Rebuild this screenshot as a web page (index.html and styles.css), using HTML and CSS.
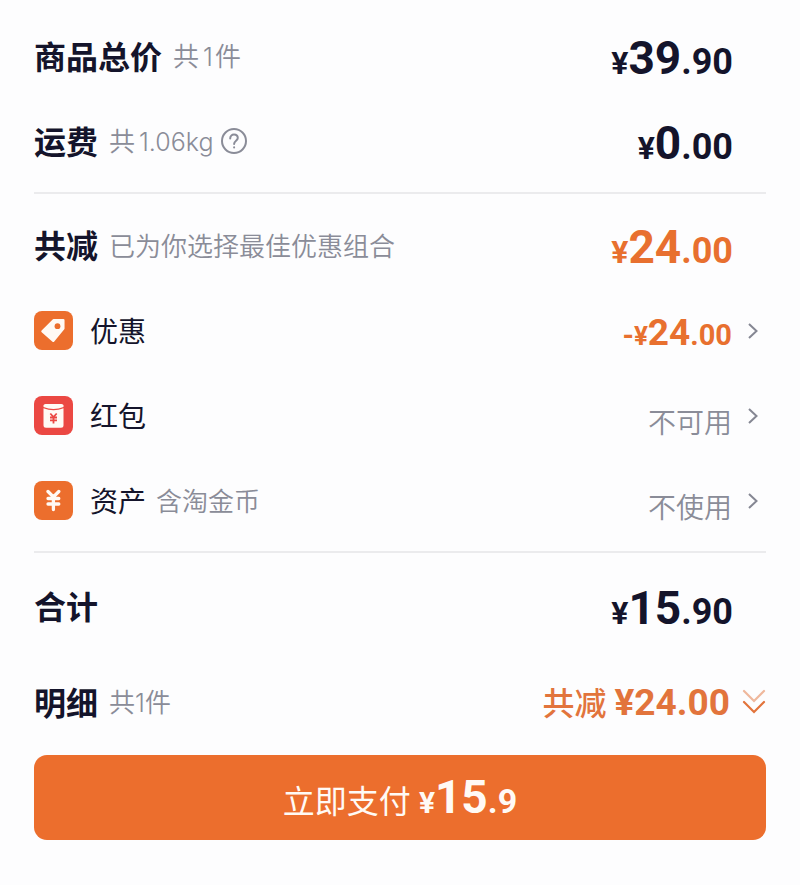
FILE: index.html
```html
<!DOCTYPE html>
<html lang="zh-CN">
<head>
  <meta charset="UTF-8">
  <meta name="viewport" content="width=device-width, initial-scale=1.0">
  <title>订单支付</title>
  <link rel="stylesheet" href="styles.css">
</head>
<body>
  <main class="checkout">
    <section class="section">
      <div class="row">
        <h2 class="title">商品总价</h2>
        <span class="note">共<span class="num spaced">1</span>件</span>
        <span class="price"><span class="yen">¥</span><span class="int">39</span>.90</span>
      </div>
      <div class="row">
        <h2 class="title">运费</h2>
        <span class="note">共<span class="num spaced">1.06kg</span></span>
        <button class="help" type="button" aria-label="运费说明">
          <svg width="28" height="28" viewBox="0 0 28 28" fill="none" stroke="currentColor" stroke-width="2" stroke-linecap="round">
            <circle cx="14" cy="13" r="12"/>
            <path d="M10.2 10.4C10.2 8 11.8 6.6 14 6.6s3.8 1.4 3.8 3.5c0 2.6-3.7 2.8-3.7 5.8"/>
            <path d="M14.1 19.3v.2"/>
          </svg>
        </button>
        <span class="price"><span class="yen">¥</span><span class="int">0</span>.00</span>
      </div>
    </section>

    <section class="section">
      <div class="row">
        <h2 class="title">共减</h2>
        <span class="note">已为你选择最佳优惠组合</span>
        <span class="price orange"><span class="yen">¥</span><span class="int">24</span>.00</span>
      </div>
      <button class="row item" type="button">
        <!-- 标签 -->
        <svg class="icon" width="39" height="39" viewBox="0 0 39 39">
          <rect width="39" height="39" rx="8" fill="#ec6e2d"/>
          <path d="M19.8 9.2H29.3V17.4L19.300 29.800 8.500 20.300z" fill="#fffaf5" stroke="#fffaf5" stroke-width="2.500" stroke-linejoin="round"/>
          <circle cx="23.500" cy="15.200" r="2.900" fill="#ec6e2d"/>
        </svg>
        <span class="label">优惠</span>
        <span class="price small orange">-<span class="yen">¥</span><span class="int">24</span>.00</span>
        <svg class="arrow" width="12" height="18" viewBox="0 0 12 18"><path d="M2 2l7.500 7L2 16"/></svg>
      </button>
      <button class="row item" type="button">
        <!-- 红包 -->
        <svg class="icon" width="39" height="39" viewBox="0 0 39 39">
          <rect width="39" height="39" rx="8" fill="#eb4843"/>
          <path d="M9.500 11v-1.500Q9.500 8 11.500 8h16q2 0 2 1.500V11q-10 4-20 0z" fill="#fffaf5"/>
          <path d="M9.500 12.200q10 4.300 20 0v17q0 2.500-2.500 2.500H12q-2.500 0-2.500-2.500z" fill="#fffaf5"/>
          <path d="M16.300 17.500l3.200 3.500 3.200-3.500M16 21.500h7M16 24.300h7M19.500 21v6.500" fill="none" stroke="#eb4843" stroke-width="1.800"/>
        </svg>
        <span class="label">红包</span>
        <span class="state">不可用</span>
        <svg class="arrow" width="12" height="18" viewBox="0 0 12 18"><path d="M2 2l7.500 7L2 16"/></svg>
      </button>
      <button class="row item" type="button">
        <!-- 资产 -->
        <svg class="icon" width="39" height="39" viewBox="0 0 39 39">
          <rect width="39" height="39" rx="8" fill="#ec6e2d"/>
          <path d="M14 10.500l5.400 5.500 5.400-5.500M14 17.500h10.800M14 23h10.800M19.400 16v12.500" fill="none" stroke="#fffaf5" stroke-width="3.300" stroke-linecap="round"/>
        </svg>
        <span class="label">资产</span>
        <span class="note">含淘金币</span>
        <span class="state">不使用</span>
        <svg class="arrow" width="12" height="18" viewBox="0 0 12 18"><path d="M2 2l7.500 7L2 16"/></svg>
      </button>
    </section>

    <section class="section total">
      <div class="row">
        <h2 class="title">合计</h2>
        <span class="price"><span class="yen">¥</span><span class="int">15</span>.90</span>
      </div>
      <div class="row">
        <h2 class="title">明细</h2>
        <span class="note">共<span class="num">1</span>件</span>
        <button class="detail" type="button">
          <span>共减</span>
          <span class="amount">¥24.00</span>
          <svg width="24" height="26" viewBox="0 0 24 26" fill="none" stroke="#e2743c" stroke-width="2.200" stroke-linecap="round">
            <path d="M2 2l10 10L22 2" opacity=".5"/>
            <path d="M2 13l10 10 10-10"/>
          </svg>
        </button>
      </div>
    </section>

    <button class="pay" type="button">
      <span>立即支付</span>
      <span class="pay-price"><span class="yen">¥</span><span class="int">15</span>.9</span>
    </button>
  </main>
</body>
</html>
```
FILE: styles.css
```css
* {
  box-sizing: border-box;
}
body {
  margin: 0;
  background-color: #fdfdfe;
  color: #14142b;
  font-family: "Noto Sans CJK SC", sans-serif;
}
button {
  border: none;
  background: none;
  padding: 0;
  color: inherit;
  font-family: inherit;
  cursor: pointer;
}
.checkout {
  padding: 14px 34px 45px;
}
.section {
  padding-bottom: 8px;
  margin-bottom: 9px;
  border-bottom: 2px solid #ebebed;
}
.row {
  display: flex;
  align-items: center;
  width: 100%;
  height: 85px;
  padding-right: 33px;
  text-align: left;
}
.title {
  margin: 0 11px 0 0;
  padding-bottom: 3px;
  font-size: 32px;
  line-height: 48px;
  font-weight: 700;
}
.note {
  padding-bottom: 1px;
  color: #8a8c98;
  font-size: 26px;
  line-height: 40px;
  font-weight: 350;
}
.num {
  font-family: Inter, sans-serif;
  font-size: 25px;
}
.spaced {
  margin: 0 2px 0 4px;
}
.help {
  display: flex;
  margin-left: 5px;
  color: #8a8c98;
}
.price {
  margin-left: auto;
  padding-top: 8px;
  font-family: Roboto, sans-serif;
  font-size: 36px;
  line-height: 56px;
  font-weight: 700;
}
.yen {
  font-size: 32px;
}
.int {
  font-size: 46px;
}
.orange {
  color: #e8702f;
}
.item {
  padding-right: 7px;
}
.icon {
  margin-right: 17px;
}
.label {
  margin-right: 10px;
  padding-bottom: 1px;
  font-size: 28px;
  line-height: 40px;
}
.small {
  font-size: 29px;
}
.small .yen {
  font-size: 26px;
}
.small .int {
  font-size: 37px;
}
.state {
  margin-left: auto;
  padding-top: 10px;
  color: #8a8c98;
  font-size: 28px;
  line-height: 40px;
  font-weight: 350;
}
.arrow {
  margin-left: 15px;
  fill: none;
  stroke: #858793;
  stroke-width: 2;
}
.total {
  padding: 0;
  margin-bottom: 5px;
  margin-top: -4px;
  border: none;
}
.total .row {
  height: 96px;
}
.total .row:last-child {
  padding-right: 0;
}
.detail {
  display: flex;
  align-items: baseline;
  margin-left: auto;
  color: #e2743c;
  font-size: 32px;
  line-height: 48px;
  font-weight: 500;
}
.amount {
  margin: 0 12px 0 8px;
  font-family: Roboto, sans-serif;
  font-size: 37px;
  font-weight: 700;
}
.pay {
  display: flex;
  align-items: baseline;
  justify-content: center;
  width: 100%;
  padding: 14px 0 9px;
  border-radius: 13px;
  background-color: #ec6e2d;
  color: #fffaf5;
  font-size: 32px;
  line-height: 56px;
}
.pay-price {
  margin-left: 8px;
  font-family: Roboto, sans-serif;
  font-size: 34px;
  font-weight: 700;
}
.pay-price .yen {
  font-size: 30px;
}
```
